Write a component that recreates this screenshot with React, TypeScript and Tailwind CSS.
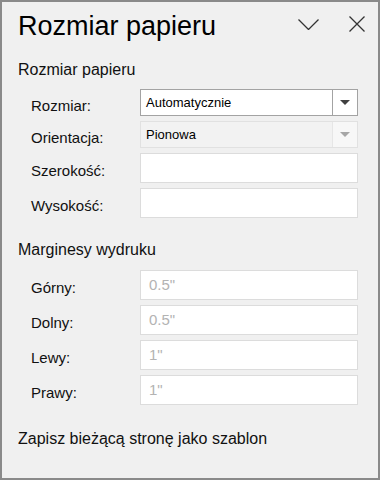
import React from "react";

const font = { fontFamily: '"Liberation Sans", Arial, sans-serif' };

const Caret: React.FC<{ color: string }> = ({ color }) => (
  <svg width="10" height="5" viewBox="0 0 10 5">
    <path d="M0 0 L10 0 L5 5 Z" fill={color} />
  </svg>
);

const Row: React.FC<{ label: string; height: string; children: React.ReactNode }> = ({
  label,
  height,
  children,
}) => (
  <div className={`flex items-center pl-[13px] ${height}`}>
    <span className="w-[109px] text-[15px] leading-[18px] text-[#111] mt-[6px]">{label}</span>
    {children}
  </div>
);

const TextBox: React.FC<{ placeholder?: string }> = ({ placeholder }) => (
  <div className="w-[218px] h-full bg-white border border-[#dcdcdc] flex items-center pl-[8px] text-[15px] text-[#b3b3b3]">
    {placeholder}
  </div>
);

export default function App() {
  return (
    <div
      className="w-[380px] h-[480px] border-2 border-[#8a8a8a] bg-[#f0f0f0] px-4 flex flex-col"
      style={font}
    >
      {/* Header */}
      <div className="flex items-start pt-[9px] -mr-4 pr-[13px]">
        <h1 className="text-[27px] leading-[31px] text-black flex-1">Rozmiar papieru</h1>
        <svg width="21" height="11" viewBox="0 0 21 11" className="mt-[8px] text-[#333]">
          <path d="M0.5 0.5 L10.5 10.5 L20.5 0.5" fill="none" stroke="currentColor" strokeWidth="1.3" />
        </svg>
        <svg width="16" height="16" viewBox="0 0 16 16" className="mt-[5px] ml-[30px] text-[#333]">
          <path d="M0.5 0.5 L15.5 15.5 M15.5 0.5 L0.5 15.5" fill="none" stroke="currentColor" strokeWidth="1.3" />
        </svg>
      </div>

      {/* Paper size */}
      <h2 className="mt-[18px] text-[16px] leading-[20px] text-[#111]">Rozmiar papieru</h2>
      <div className="mt-[9px] flex flex-col gap-[5px]">
        <Row label="Rozmiar:" height="h-[27px]">
          <div className="w-[218px] h-full bg-white border border-[#a3a3a3] flex">
            <div className="flex-1 flex items-center pl-[5px] text-[13px] text-black">Automatycznie</div>
            <div className="w-[25px] border-l border-[#a3a3a3] flex items-center justify-center">
              <Caret color="#404040" />
            </div>
          </div>
        </Row>
        <Row label="Orientacja:" height="h-[27px]">
          <div className="w-[218px] h-full bg-[#f2f2f2] border border-[#e1e1e1] flex">
            <div className="flex-1 flex items-center pl-[5px] text-[13px] text-black">Pionowa</div>
            <div className="w-[25px] border-l border-[#e6e6e6] bg-[#f7f7f7] flex items-center justify-center">
              <Caret color="#a6a6a6" />
            </div>
          </div>
        </Row>
        <Row label="Szerokość:" height="h-[30px]">
          <TextBox />
        </Row>
        <Row label="Wysokość:" height="h-[30px]">
          <TextBox />
        </Row>
      </div>

      {/* Margins */}
      <h2 className="mt-[22px] text-[16px] leading-[20px] text-[#111]">Marginesy wydruku</h2>
      <div className="mt-[10px] flex flex-col gap-[5px]">
        <Row label="Górny:" height="h-[30px]">
          <TextBox placeholder={'0.5"'} />
        </Row>
        <Row label="Dolny:" height="h-[30px]">
          <TextBox placeholder={'0.5"'} />
        </Row>
        <Row label="Lewy:" height="h-[30px]">
          <TextBox placeholder={'1"'} />
        </Row>
        <Row label="Prawy:" height="h-[30px]">
          <TextBox placeholder={'1"'} />
        </Row>
      </div>

      <p className="mt-[24px] text-[16px] leading-[20px] text-[#111]">Zapisz bieżącą stronę jako szablon</p>
    </div>
  );
}
